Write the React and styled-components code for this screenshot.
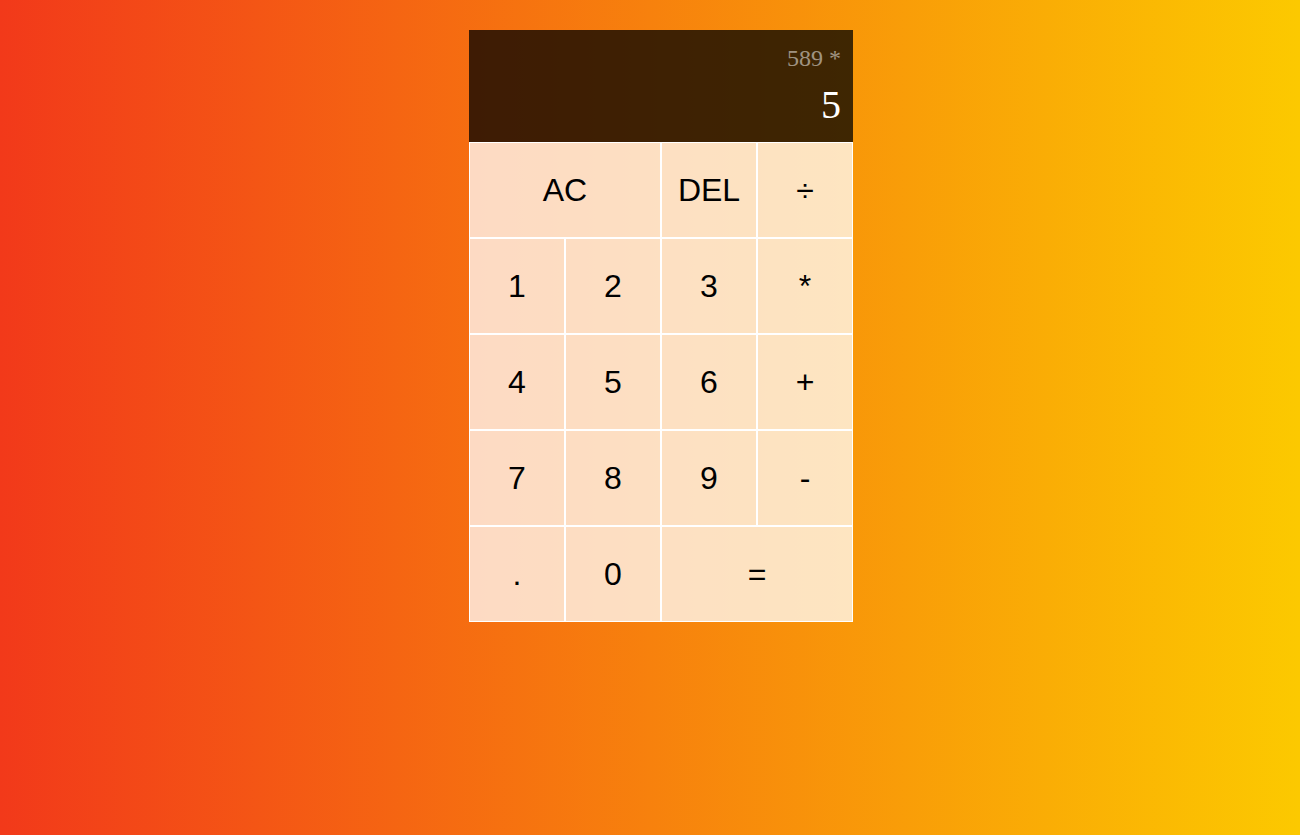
import React from "react";
import styled, { createGlobalStyle } from "styled-components";

const Global = createGlobalStyle`
  *, *::before, *::after { box-sizing: border-box; }
  html, body { margin: 0; padding: 0; }
  body {
    min-height: 835px;
    background: linear-gradient(to right, #f2391a, #fcc900);
    font-family: "Liberation Serif", serif;
  }
`;

const Grid = styled.div`
  display: grid;
  justify-content: center;
  padding: 30px 0 0 22px;
  grid-template-columns: repeat(4, 96px);
  grid-template-rows: minmax(112px, auto) repeat(5, 96px);
`;

const Output = styled.div`
  grid-column: 1 / -1;
  background-color: rgba(0, 0, 0, 0.75);
  display: flex;
  flex-direction: column;
  align-items: flex-end;
  justify-content: space-around;
  padding: 10px 12px;
  word-wrap: break-word;
  word-break: break-all;
`;

const Previous = styled.div`
  color: rgba(255, 255, 255, 0.52);
  font-size: 24px;
  font-family: "Liberation Serif", serif;
`;

const Current = styled.div`
  color: white;
  font-size: 40px;
  font-family: "Liberation Serif", serif;
`;

const Key = styled.button`
  cursor: pointer;
  font-size: 32px;
  font-family: "Liberation Sans", Arial, sans-serif;
  color: #000;
  border: 1px solid white;
  outline: none;
  padding: 0;
  background-color: rgba(255, 255, 255, 0.75);
  grid-column: ${(p) => (p.$wide ? "span 2" : "auto")};
`;

const keys = [
  ["AC", true], ["DEL"], ["÷"],
  ["1"], ["2"], ["3"], ["*"],
  ["4"], ["5"], ["6"], ["+"],
  ["7"], ["8"], ["9"], ["-"],
  ["."], ["0"], ["=", true],
];

export default function App() {
  return (
    <>
      <Global />
      <Grid>
        <Output>
          <Previous>589 *</Previous>
          <Current>5</Current>
        </Output>
        {keys.map(([label, wide], i) => (
          <Key key={i} $wide={wide}>{label}</Key>
        ))}
      </Grid>
    </>
  );
}
